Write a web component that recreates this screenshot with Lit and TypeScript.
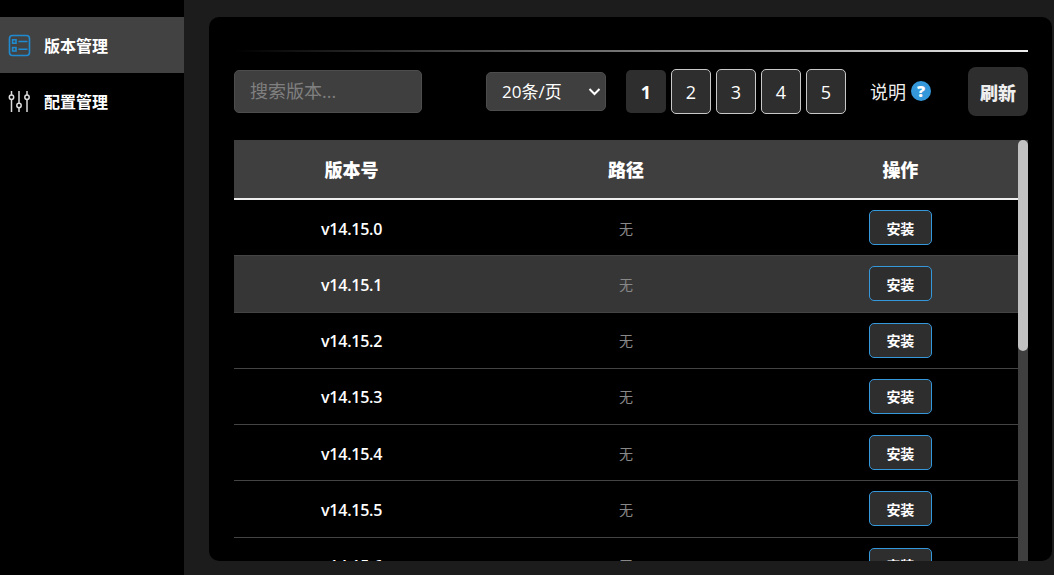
import { LitElement, html, css } from "lit";
import { customElement } from "lit/decorators.js";

const versions = Array.from({ length: 7 }, (_, i) => `v14.15.${i}`);

@customElement("app-root")
export class AppRoot extends LitElement {
  static styles = css`
    :host {
      display: grid;
      grid-template-columns: 184px 1fr;
      height: 100vh;
      overflow: hidden;
      background: #1c1c1c;
      color: #fff;
      font-family: "Open Sans", "Noto Sans CJK SC", sans-serif;
    }
    * { box-sizing: border-box; }
    .side {
      background: #000;
      padding-top: 17px;
    }
    .nav {
      display: flex;
      align-items: center;
      height: 56px;
      gap: 13px;
      padding-left: 8px;
      font-size: 16px;
      font-weight: 700;
    }
    .nav.active { background: #424242; }
    .nav svg { width: 23px; height: 23px; flex: none; }
    .main {
      min-width: 0;
      min-height: 0;
      padding: 17px 2px 14px 25px;
      display: flex;
    }
    .card {
      flex: 1;
      min-width: 0;
      background: #000;
      border-radius: 10px;
      padding: 33px 24px 0 25px;
      display: flex;
      flex-direction: column;
      overflow: hidden;
    }
    .rule {
      height: 2px;
      flex: none;
      background: linear-gradient(to right, #000, #eee);
    }
    .tools {
      display: flex;
      align-items: center;
      height: 49px;
      flex: none;
      margin: 15px 0 24px;
    }
    .search {
      width: 188px;
      height: 43px;
      background: #3f3f3f;
      border: 1px solid #4d4d4d;
      border-radius: 5px;
      color: #fff;
      font: 18px "Open Sans", "Noto Sans CJK SC", sans-serif;
      padding: 0 15px 2px;
      outline: none;
    }
    .search::placeholder { color: #7f7f7f; }
    .select-wrap {
      position: relative;
      width: 120px;
      height: 39px;
      margin-left: 64px;
    }
    select {
      appearance: none;
      width: 100%;
      height: 100%;
      background: #3f3f3f;
      border: 1px solid #4d4d4d;
      border-radius: 5px;
      color: #fff;
      font: 17px "Open Sans", "Noto Sans CJK SC", sans-serif;
      padding: 0 15px;
    }
    .chev {
      position: absolute;
      right: 5px;
      top: 15px;
      width: 13px;
      height: 9px;
      pointer-events: none;
    }
    .pager {
      display: flex;
      align-items: center;
      gap: 5px;
      margin-left: 20px;
    }
    .page {
      width: 40px;
      height: 45px;
      display: flex;
      align-items: center;
      justify-content: center;
      background: #2e2e2e;
      border: 1px solid #c8c8c8;
      border-radius: 5px;
      font-size: 18px;
    }
    .page.current {
      height: 43px;
      border: none;
      font-weight: 700;
    }
    .help {
      display: flex;
      align-items: center;
      gap: 5px;
      margin-left: 24px;
      padding-bottom: 1px;
      font-size: 18px;
      color: #eee;
    }
    .q {
      width: 20px;
      height: 20px;
      border-radius: 50%;
      background: #3498db;
      color: #fff;
      font-size: 16px;
      font-weight: 800;
      display: flex;
      align-items: center;
      justify-content: center;
    }
    .refresh {
      margin-left: auto;
      width: 60px;
      height: 49px;
      display: flex;
      align-items: center;
      justify-content: center;
      background: #2e2e2e;
      border-radius: 8px;
      font-size: 18px;
      font-weight: 900;
      color: #eee;
    }
    .scroll {
      flex: 1;
      min-height: 0;
      overflow: hidden;
      display: flex;
    }
    .rows { flex: 1; min-width: 0; }
    .bar {
      width: 10px;
      flex: none;
      background: #3f3f3f;
    }
    .thumb {
      height: 211px;
      background: #c1c1c1;
      border-radius: 5px;
    }
    .row {
      display: grid;
      grid-template-columns: 30% 40% 30%;
      align-items: center;
      justify-items: center;
    }
    .head {
      height: 60px;
      background: #3f3f3f;
      border-bottom: 2px solid #eee;
      font-size: 18px;
      font-weight: 900;
    }
    .body {
      height: 56.25px;
      border-bottom: 1px solid #444;
    }
    .body.hover { background: #363636; }
    .ver {
      padding-top: 2px;
      font-size: 16px;
      font-weight: 600;
      letter-spacing: -0.25px;
    }
    .path { font-size: 14px; color: #888; }
    .install {
      width: 63px;
      height: 35px;
      display: flex;
      align-items: center;
      justify-content: center;
      background: #2e2e2e;
      border: 1px solid #3498db;
      border-radius: 5px;
      font-size: 14px;
      font-weight: 700;
    }
  `;

  render() {
    return html`
      <aside class="side">
        <div class="nav active">
          <svg viewBox="0 0 23 23" fill="none" stroke="#1f8ad0" stroke-width="1.6">
            <rect x="1.5" y="1.5" width="20" height="20" rx="3"></rect>
            <rect x="4.6" y="5.8" width="3.4" height="3.4"></rect>
            <rect x="4.6" y="13.6" width="3.4" height="3.4"></rect>
            <path d="M10.5 7.5h9M10.5 15.3h9"></path>
          </svg>
          版本管理
        </div>
        <div class="nav">
          <svg viewBox="0 0 23 23" fill="none" stroke="#ddd" stroke-width="1.5">
            <path d="M3.5 1v4.5M3.5 9.5V22M11 1v12.5M11 17.5V22M19 1v4.5M19 9.5V22"></path>
            <circle cx="3.5" cy="7.3" r="2.2"></circle>
            <circle cx="11" cy="15.5" r="2.2"></circle>
            <circle cx="19" cy="7.3" r="2.2"></circle>
          </svg>
          配置管理
        </div>
      </aside>
      <main class="main">
        <section class="card">
          <div class="rule"></div>
          <div class="tools">
            <input class="search" placeholder="搜索版本..." />
            <div class="select-wrap">
              <select><option>20条/页</option></select>
              <svg class="chev" viewBox="0 0 13 9" fill="none" stroke="#fff" stroke-width="2">
                <path d="M1.5 2l5 5 5-5"></path>
              </svg>
            </div>
            <div class="pager">
              ${[1, 2, 3, 4, 5].map(
                (n) => html`<div class="page ${n === 1 ? "current" : ""}">${n}</div>`
              )}
            </div>
            <div class="help">说明 <span class="q">?</span></div>
            <div class="refresh">刷新</div>
          </div>
          <div class="scroll">
            <div class="rows">
              <div class="row head"><span>版本号</span><span>路径</span><span>操作</span></div>
              ${versions.map(
                (v, i) => html`
                  <div class="row body ${i === 1 ? "hover" : ""}">
                    <span class="ver">${v}</span>
                    <span class="path">无</span>
                    <div class="install">安装</div>
                  </div>
                `
              )}
            </div>
            <div class="bar"><div class="thumb"></div></div>
          </div>
        </section>
      </main>
    `;
  }
}
